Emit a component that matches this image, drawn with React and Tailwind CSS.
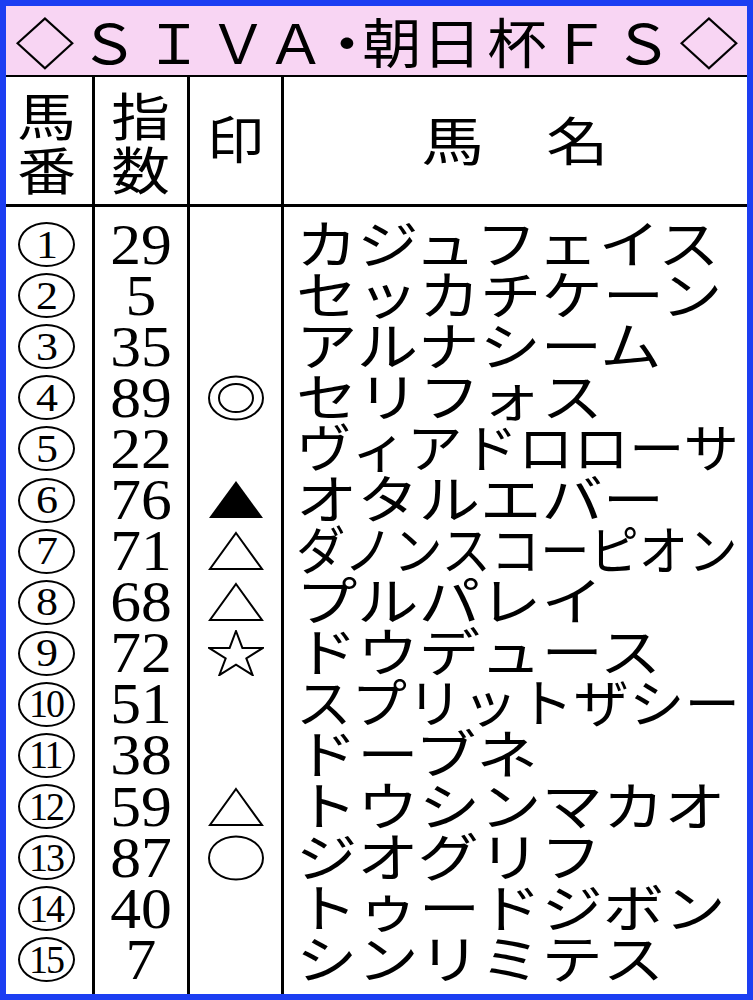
import React from "react";

const rows = [
  [1, "29", null, "カジュフェイス"],
  [2, "5", null, "セッカチケーン"],
  [3, "35", null, "アルナシーム"],
  [4, "89", "dbl", "セリフォス"],
  [5, "22", null, "ヴィアドロローサ"],
  [6, "76", "tri-fill", "オタルエバー"],
  [7, "71", "tri", "ダノンスコーピオン"],
  [8, "68", "tri", "プルパレイ"],
  [9, "72", "star", "ドウデュース"],
  [10, "51", null, "スプリットザシー"],
  [11, "38", null, "ドーブネ"],
  [12, "59", "tri", "トウシンマカオ"],
  [13, "87", "circle", "ジオグリフ"],
  [14, "40", null, "トゥードジボン"],
  [15, "7", null, "シンリミテス"],
];

function starPoints() {
  const R = 28.4, r = R * 0.382, sy = 0.86, cx = 28, cy = 1 + R * sy;
  const pts = [];
  for (let k = 0; k < 10; k++) {
    const a = (-90 + k * 36) * Math.PI / 180;
    const rad = k % 2 === 0 ? R : r;
    pts.push(`${(cx + rad * Math.cos(a)).toFixed(2)},${(cy + rad * Math.sin(a) * sy).toFixed(2)}`);
  }
  return pts.join(" ");
}

function Mark({ type }) {
  if (!type) return null;
  return (
    <svg width="56" height="46" viewBox="0 0 56 46">
      {type === "dbl" && (
        <>
          <ellipse cx="28" cy="23" rx="27" ry="21.5" fill="none" stroke="#000" strokeWidth="2" />
          <ellipse cx="28" cy="23" rx="17" ry="14" fill="none" stroke="#000" strokeWidth="2" />
        </>
      )}
      {type === "tri-fill" && <polygon points="28,4 55,41 1,41" fill="#000" />}
      {type === "tri" && <polygon points="28,5 54,41 2,41" fill="none" stroke="#000" strokeWidth="2" />}
      {type === "star" && <polygon points={starPoints()} fill="none" stroke="#000" strokeWidth="2" strokeLinejoin="miter" />}
      {type === "circle" && <ellipse cx="28" cy="23" rx="27" ry="21.5" fill="none" stroke="#000" strokeWidth="2" />}
    </svg>
  );
}

const title = [
  ["◇", 64], ["Ｓ", 63], ["Ｉ", 67], ["Ｖ", 62], ["Ａ", 51], ["・", 45],
  ["朝", 54], ["日", 66], ["杯", 64], ["Ｆ", 62], ["Ｓ", 64], ["◇", 67],
];

function nameScale(name) {
  const n = [...name].length;
  if (n <= 7) return 1.18;
  return 444 / (n * 52);
}

export default function App() {
  return (
    <div className="w-[753px] h-[1000px] border-[6px] border-[#1c3ef2] bg-white flex flex-col text-black font-['Noto_Sans_CJK_JP',sans-serif] overflow-hidden">
      {/* title */}
      <div className="h-[71px] bg-[#f8d5f3] border-b-2 border-black flex items-center pl-[7px] shrink-0">
        {title.map(([c, w], i) => (
          <span key={i} style={{ width: w }} className="text-center text-[54px] leading-none">
            <span className="inline-block scale-x-[1.1]">{c}</span>
          </span>
        ))}
      </div>
      {/* header */}
      <div className="h-[130px] shrink-0 grid grid-cols-[89px_95px_94px_1fr] border-b-[3px] border-black">
        <div className="border-r-[3px] border-black flex flex-col items-center justify-center pr-[4px] text-[51px] leading-[54px]">
          <span className="inline-block scale-x-[1.15]">馬</span>
          <span className="inline-block scale-x-[1.15]">番</span>
        </div>
        <div className="border-r-[3px] border-black flex flex-col items-center justify-center text-[51px] leading-[54px]">
          <span className="inline-block scale-x-[1.15]">指</span>
          <span className="inline-block scale-x-[1.15]">数</span>
        </div>
        <div className="border-r-[3px] border-black flex items-center justify-center text-[51px] leading-none pb-[6px]">
          <span className="inline-block scale-x-[1.12]">印</span>
        </div>
        <div className="flex items-center justify-center text-[52px] leading-none pb-[4px]">
          <span className="inline-block scale-x-[1.2]">馬　名</span>
        </div>
      </div>
      {/* body */}
      <div className="flex-1 grid grid-cols-[89px_95px_94px_1fr]">
        <div className="border-r-[3px] border-black pt-[12px] flex flex-col">
          {rows.map(([n]) => (
            <div key={n} className="h-[51.1px] flex items-center justify-center pr-[5px]">
              <div className="w-[57px] h-[45px] rounded-[50%] border-[2.5px] border-black flex items-center justify-center font-['Liberation_Serif',serif] text-[40px] leading-none">
                <span className={`inline-block ${n >= 10 ? "tracking-[-2px] scale-x-[0.95] pr-[2px]" : "scale-x-[1.1]"}`}>{n}</span>
              </div>
            </div>
          ))}
        </div>
        <div className="border-r-[3px] border-black pt-[12px] flex flex-col">
          {rows.map(([n, v]) => (
            <div key={n} className="h-[51.1px] flex items-center justify-center font-['Liberation_Serif',serif] text-[56px] leading-none">
              <span className="inline-block scale-x-[1.1]">{v}</span>
            </div>
          ))}
        </div>
        <div className="border-r-[3px] border-black pt-[12px] flex flex-col">
          {rows.map(([n, , m]) => (
            <div key={n} className="h-[51.1px] flex items-center justify-center">
              <Mark type={m} />
            </div>
          ))}
        </div>
        <div className="pt-[9px] flex flex-col pl-[12px]">
          {rows.map(([n, , , name]) => (
            <div key={n} className="h-[51.1px] flex items-center text-[52px] leading-none whitespace-nowrap">
              <span className="inline-block origin-left" style={{ transform: `scaleX(${nameScale(name)})` }}>{name}</span>
            </div>
          ))}
        </div>
      </div>
    </div>
  );
}
